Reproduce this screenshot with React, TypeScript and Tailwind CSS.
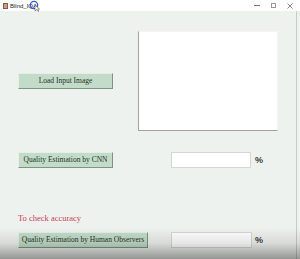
import React from "react";

const serif = { fontFamily: '"Liberation Serif", "Times New Roman", serif' };
const sans = { fontFamily: '"Liberation Sans", Arial, sans-serif' };

function Btn({ label, w }: { label: string; w: string }) {
  return (
    <div
      className={`${w} h-[16px] flex items-center justify-center whitespace-nowrap bg-[#c3dcc9] border border-t-[#e4efe6] border-l-[#e4efe6] border-b-[#7f9483] border-r-[#7f9483] text-[7.5px] text-[#24332a] leading-none`}
      style={serif}
    >
      {label}
    </div>
  );
}

function Entry({ w }: { w: string }) {
  return <div className={`${w} h-[16px] bg-white border border-[#d4d8d4]`} />;
}

export default function App() {
  return (
    <div className="relative w-[300px] h-[259px] overflow-hidden bg-[#eef2ee]">
      {/* title bar */}
      <div className="h-[11px] bg-white flex items-center relative">
        <div className="ml-[3px] w-[5px] h-[6px] bg-[#c8a08a] border border-[#8a5a48]" />
        <span className="ml-[2px] text-[6px] leading-none text-[#222]" style={sans}>
          Blind_IQA
        </span>
        <svg className="absolute left-[29px] top-0" width="12" height="12" viewBox="0 0 12 12">
          <circle cx="5" cy="5" r="3.6" fill="none" stroke="#3a56d8" strokeWidth="1.3" />
          <path d="M6 5 L6 11 L7.5 9.5 L9 11.5 L9.8 11 L8.6 9 L10.5 9 Z" fill="#fff" stroke="#333" strokeWidth="0.5" />
        </svg>
        <div className="ml-auto flex items-center mr-[7px] gap-[11px]">
          <div className="w-[6px] h-px bg-[#777]" />
          <div className="w-[5px] h-[5px] border border-[#999]" />
          <svg width="6" height="6" viewBox="0 0 6 6">
            <path d="M0.5 0.5 L5.5 5.5 M5.5 0.5 L0.5 5.5" stroke="#666" strokeWidth="0.8" />
          </svg>
        </div>
      </div>

      <div className="w-[297px] border-r border-[#c8ccc8] h-[248px]">
        {/* row 1 */}
        <div className="flex items-start pt-[20px]">
          <div className="w-[138px] pl-[18px] pt-[42px]">
            <Btn label="Load Input Image" w="w-[95px]" />
          </div>
          <div className="w-[140px] h-[100px] bg-white border-l border-b border-l-[#a0a4a0] border-b-[#a0a4a0] border-t border-r border-t-[#f4f4f4] border-r-[#f4f4f4]" />
        </div>

        {/* row 2 */}
        <div className="flex items-center mt-[21px] pl-[18px]">
          <Btn label="Quality Estimation by CNN" w="w-[95px]" />
          <div className="ml-[58px]">
            <Entry w="w-[80px]" />
          </div>
          <span className="ml-[4px] text-[9px] font-bold text-[#3a3a3a] leading-none" style={sans}>
            %
          </span>
        </div>

        <div className="mt-[44px] pl-[18px] text-[8.5px] leading-[12px] text-[#c8405a]" style={serif}>
          To check accuracy
        </div>

        <div className="flex items-center mt-[8px] pl-[18px]">
          <Btn label="Quality Estimation by Human Observers" w="w-[130px]" />
          <div className="ml-[23px]">
            <Entry w="w-[81px]" />
          </div>
          <span className="ml-[3px] text-[9px] font-bold text-[#3a3a3a] leading-none" style={sans}>
            %
          </span>
        </div>
      </div>

      {/* bottom shadow overlay from the capture */}
      <div className="pointer-events-none absolute left-0 right-0 bottom-0 h-[32px] bg-gradient-to-b from-transparent via-[#00000018] to-[#00000060]" />
    </div>
  );
}
